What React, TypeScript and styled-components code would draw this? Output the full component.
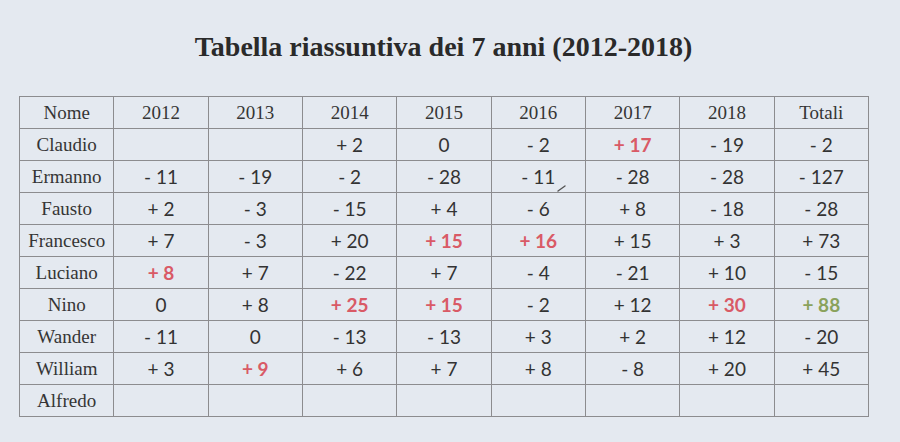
import styled, { createGlobalStyle } from 'styled-components'

type Tone = 'plain' | 'red' | 'green'
type Cell = { value: string; tone: Tone; mark?: boolean }

const GlobalStyle = createGlobalStyle`
  html, body {
    margin: 0;
    padding: 0;
    background: #e4e9f0;
  }
`

const Page = styled.div`
  width: 900px;
  height: 442px;
  box-sizing: border-box;
  padding: 29px 0 0 19px;
  background: #e4e9f0;
  overflow: hidden;
`

const Title = styled.h1`
  margin: 0 0 31px;
  width: 849px;
  text-align: center;
  font-family: 'Liberation Serif', 'Times New Roman', serif;
  font-weight: 700;
  font-size: 28px;
  line-height: 36px;
  color: #2a2a2a;
`

const Table = styled.table`
  width: 850px;
  table-layout: fixed;
  border-collapse: collapse;
  color: #333;
`

const Row = styled.tr`
  height: 32px;
`

const HeadCell = styled.td`
  border: 1px solid #8c8c8f;
  padding: 0;
  text-align: center;
  vertical-align: middle;
  font-family: 'Liberation Serif', 'Times New Roman', serif;
  font-size: 19px;
  color: #353535;
`

const ValueCell = styled.td<{ $tone: Tone }>`
  position: relative;
  border: 1px solid #8c8c8f;
  padding: 0;
  text-align: center;
  vertical-align: middle;
  font-family: Lato, 'Liberation Sans', sans-serif;
  font-size: 19px;
  font-weight: ${p => (p.$tone === 'plain' ? 400 : 700)};
  color: ${p =>
    p.$tone === 'red' ? '#d95a66' : p.$tone === 'green' ? '#8aa25c' : '#333333'};
`

const PencilMark = styled.svg`
  position: absolute;
  left: 65px;
  top: 24px;
  width: 9px;
  height: 7px;
`

const n = (value: string): Cell => ({ value, tone: 'plain' })
const r = (value: string): Cell => ({ value, tone: 'red' })
const g = (value: string): Cell => ({ value, tone: 'green' })

const years = ['2012', '2013', '2014', '2015', '2016', '2017', '2018', 'Totali']

const rows: { name: string; cells: Cell[] }[] = [
  { name: 'Claudio', cells: [n(''), n(''), n('+ 2'), n('0'), n('- 2'), r('+ 17'), n('- 19'), n('- 2')] },
  { name: 'Ermanno', cells: [n('- 11'), n('- 19'), n('- 2'), n('- 28'), { ...n('- 11'), mark: true }, n('- 28'), n('- 28'), n('- 127')] },
  { name: 'Fausto', cells: [n('+ 2'), n('- 3'), n('- 15'), n('+ 4'), n('- 6'), n('+ 8'), n('- 18'), n('- 28')] },
  { name: 'Francesco', cells: [n('+ 7'), n('- 3'), n('+ 20'), r('+ 15'), r('+ 16'), n('+ 15'), n('+ 3'), n('+ 73')] },
  { name: 'Luciano', cells: [r('+ 8'), n('+ 7'), n('- 22'), n('+ 7'), n('- 4'), n('- 21'), n('+ 10'), n('- 15')] },
  { name: 'Nino', cells: [n('0'), n('+ 8'), r('+ 25'), r('+ 15'), n('- 2'), n('+ 12'), r('+ 30'), g('+ 88')] },
  { name: 'Wander', cells: [n('- 11'), n('0'), n('- 13'), n('- 13'), n('+ 3'), n('+ 2'), n('+ 12'), n('- 20')] },
  { name: 'William', cells: [n('+ 3'), r('+ 9'), n('+ 6'), n('+ 7'), n('+ 8'), n('- 8'), n('+ 20'), n('+ 45')] },
  { name: 'Alfredo', cells: Array.from({ length: 8 }, () => n('')) },
]

export default function App() {
  return (
    <>
      <GlobalStyle />
      <Page>
        <Title>Tabella riassuntiva dei 7 anni (2012-2018)</Title>
        <Table>
          <tbody>
            <Row>
              <HeadCell>Nome</HeadCell>
              {years.map(y => (
                <HeadCell key={y}>{y}</HeadCell>
              ))}
            </Row>
            {rows.map(row => (
              <Row key={row.name}>
                <HeadCell>{row.name}</HeadCell>
                {row.cells.map((c, i) => (
                  <ValueCell key={i} $tone={c.tone}>
                    {c.value}
                    {c.mark && (
                      <PencilMark viewBox="0 0 9 7">
                        <path d="M1 6 L8 1" stroke="#555" strokeWidth="1.4" strokeLinecap="round" />
                      </PencilMark>
                    )}
                  </ValueCell>
                ))}
              </Row>
            ))}
          </tbody>
        </Table>
      </Page>
    </>
  )
}
